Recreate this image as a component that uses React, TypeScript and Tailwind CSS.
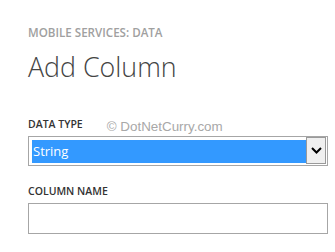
export default function App() {
  return (
    <div className="w-[335px] h-[252px] bg-white pl-[28px] pt-[27px] overflow-hidden" style={{ fontFamily: '"Open Sans", "Noto Sans", sans-serif' }}>
      <div className="text-[11.6px] leading-[12px] font-semibold text-[#a0a0a0]">MOBILE SERVICES: DATA</div>
      <div className="mt-[12px] text-[26.8px] leading-[32px] font-light text-[#444444]">Add Column</div>
      <div className="mt-[35px] flex items-start h-[12px]">
        <div className="text-[10.5px] leading-[12px] font-semibold text-[#333333]">DATA TYPE</div>
        <div className="ml-[24px] mt-[1px] text-[13.4px] leading-[15px] text-[#a8a8a8]" style={{ fontFamily: '"Liberation Sans", Arial, sans-serif' }}>© DotNetCurry.com</div>
      </div>
      <div className="mt-[6px] flex w-[300px] h-[30px] border border-[#a6a6a6] bg-white">
        <div className="flex-1 ml-[3px] mt-[3px] mb-[2px] bg-[#3399ff] text-white text-[13px] leading-[22px] pl-[1px]">String</div>
        <div className="w-[20px] mb-[1px] mr-[1px] border border-[#9a9a9a] bg-[#f0f0f0] flex items-center justify-center">
          <svg width="11" height="7" viewBox="0 0 11 7">
            <polyline points="1,1 5.5,5.5 10,1" fill="none" stroke="#000" strokeWidth="2" />
          </svg>
        </div>
      </div>
      <div className="mt-[19px] text-[10.5px] leading-[12px] font-semibold text-[#333333]">COLUMN NAME</div>
      <div className="mt-[6px] w-[300px] h-[31px] border border-[#a6a6a6] bg-white"></div>
    </div>
  );
}
